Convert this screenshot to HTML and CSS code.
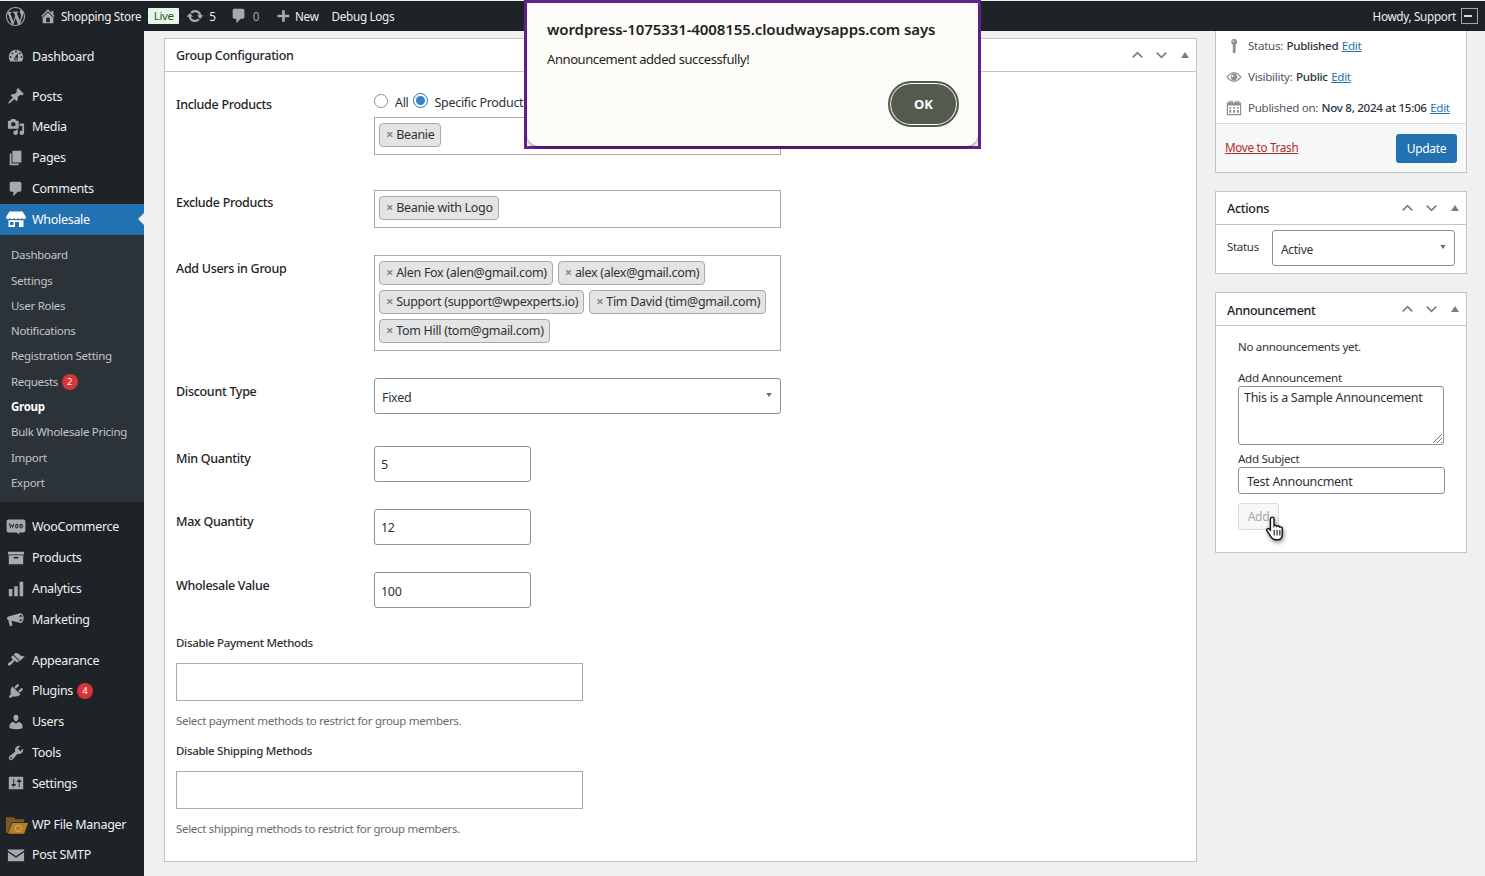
FILE: index.html
```html
<!DOCTYPE html>
<html lang="en">
<head>
<meta charset="utf-8">
<title>Edit Group</title>
<link rel="stylesheet" href="styles.css">
</head>
<body>
<svg class="defs" width="0" height="0" aria-hidden="true">
<symbol id="i-wp" viewBox="0 0 20 20"><path d="M20 10c0-5.51-4.49-10-10-10C4.48 0 0 4.49 0 10c0 5.52 4.48 10 10 10 5.51 0 10-4.48 10-10zM7.78 15.37L4.37 6.22c.55-.02 1.17-.08 1.17-.08.5-.06.44-1.13-.06-1.11 0 0-1.45.11-2.37.11-.18 0-.37 0-.58-.01C4.12 2.69 6.87 1.11 10 1.11c2.33 0 4.45.87 6.05 2.34-.68-.11-1.65.39-1.65 1.58 0 .74.45 1.36.9 2.1.35.61.55 1.36.55 2.46 0 1.49-1.4 5-1.4 5l-3.03-8.37c.54-.02.82-.17.82-.17.5-.05.44-1.25-.06-1.22 0 0-1.44.12-2.38.12-.87 0-2.33-.12-2.33-.12-.5-.03-.56 1.2-.06 1.22l.92.08 1.26 3.41zM17.41 10c.24-.64.74-1.87.43-4.25.7 1.29 1.05 2.71 1.05 4.25 0 3.29-1.73 6.24-4.4 7.78.97-2.59 1.94-5.2 2.92-7.78zM6.1 18.09C3.12 16.65 1.11 13.53 1.11 10c0-1.3.23-2.48.72-3.59C3.25 10.3 4.67 14.2 6.1 18.09zm4.03-6.63l2.58 6.98c-.86.29-1.76.45-2.71.45-.79 0-1.57-.11-2.29-.33.81-2.38 1.62-4.74 2.42-7.1z"/></symbol>
<symbol id="i-home" viewBox="0 0 20 20"><path d="M16 8.5l1.53 1.53-1.06 1.06L10 4.62l-6.47 6.47-1.06-1.06L10 2.5l4 4v-2h2v4zm-6-2.46l6 5.99V18H4v-5.97zM12 17v-5H8v5h4z"/></symbol>
<symbol id="i-update" viewBox="0 0 20 20"><path d="M10.2 3.28c3.53 0 6.43 2.61 6.92 6h2.08l-3.5 4-3.5-4h2.32c-.45-1.97-2.21-3.45-4.32-3.45-1.45 0-2.73.71-3.54 1.78L4.95 5.66C6.23 4.2 8.11 3.28 10.2 3.28zm-.4 13.44c-3.52 0-6.43-2.61-6.92-6H.8l3.5-4c1.17 1.33 2.33 2.67 3.5 4H5.48c.45 1.97 2.21 3.45 4.32 3.45 1.45 0 2.73-.71 3.54-1.78l1.71 1.95c-1.28 1.46-3.15 2.38-5.25 2.38z"/></symbol>
<symbol id="i-comment" viewBox="0 0 20 20"><path d="M5 2h9c1.1 0 2 .9 2 2v7c0 1.1-.9 2-2 2h-2l-5 5v-5H5c-1.1 0-2-.9-2-2V4c0-1.1.9-2 2-2z"/></symbol>
<symbol id="i-plus" viewBox="0 0 20 20"><path d="M17 7v3h-5v5H9v-5H4V7h5V2h3v5h5z" transform="translate(0 1.5)"/></symbol>
<symbol id="i-dash" viewBox="0 0 20 20"><path d="M3.76 16h12.48c1.1-1.37 1.76-3.11 1.76-5 0-4.42-3.58-8-8-8s-8 3.58-8 8c0 1.89.66 3.63 1.76 5zM10 4c.55 0 1 .45 1 1s-.45 1-1 1-1-.45-1-1 .45-1 1-1zM6 6c.55 0 1 .45 1 1s-.45 1-1 1-1-.45-1-1 .45-1 1-1zm8 0c.55 0 1 .45 1 1s-.45 1-1 1-1-.45-1-1 .45-1 1-1zm-5.37 5.55L12 7v6c0 1.1-.9 2-2 2s-2-.9-2-2c0-.57.24-1.08.63-1.45zM4 10c.55 0 1 .45 1 1s-.45 1-1 1-1-.45-1-1 .45-1 1-1zm12 0c.55 0 1 .45 1 1s-.45 1-1 1-1-.45-1-1 .45-1 1-1zm-5 3c0-.55-.45-1-1-1s-1 .45-1 1 .45 1 1 1 1-.45 1-1z"/></symbol>
<symbol id="i-post" viewBox="0 0 20 20"><path d="M10.44 3.02l1.82-1.82 6.36 6.35-1.83 1.82c-1.05-.68-2.48-.57-3.41.36l-.75.75c-.92.93-1.04 2.35-.35 3.41l-1.83 1.82-2.41-2.41-2.8 2.79c-.42.42-3.38 2.71-3.8 2.29s1.86-3.39 2.28-3.81l2.79-2.79L4.1 9.36l1.83-1.82c1.05.69 2.48.57 3.4-.36l.75-.75c.93-.92 1.05-2.35.36-3.41z"/></symbol>
<symbol id="i-media" viewBox="0 0 20 20"><path d="M13 11V4c0-.55-.45-1-1-1h-1.67L9 1H5L3.67 3H2c-.55 0-1 .45-1 1v7c0 .55.45 1 1 1h10c.55 0 1-.45 1-1zM7 4.5c1.38 0 2.5 1.12 2.5 2.5S8.38 9.5 7 9.5 4.5 8.38 4.5 7 5.62 4.5 7 4.5zM14 6h5v10.5c0 1.38-1.12 2.5-2.5 2.5S14 17.88 14 16.5s1.12-2.5 2.5-2.5c.17 0 .34.02.5.05V9h-3V6zm-4 8.05V13h2v3.5c0 1.38-1.12 2.5-2.5 2.5S7 17.88 7 16.5 8.12 14 9.5 14c.17 0 .34.02.5.05z"/></symbol>
<symbol id="i-page" viewBox="0 0 20 20"><path d="M6 15V2h10v13H6zm-1 1h8v2H3V5h2v11z"/></symbol>
<symbol id="i-store" viewBox="0 0 20 20"><path d="M3.5 2.5h13L20 8c0 1.3-1 2.2-2.1 2.2-.9 0-1.6-.5-1.9-1.2-.4.7-1.1 1.2-2 1.2S12.400 9.700 12 9c-.4.7-1.100 1.200-2 1.200S8.400 9.700 8 9c-.4.700-1.100 1.200-2 1.200S4.400 9.700 4 9c-.3.700-1 1.200-1.900 1.200C1 10.200 0 9.300 0 8zM2.500 11.300h15V18H13v-5H9v5H2.500zM4 13v3h3.500v-3z"/></symbol>
<symbol id="i-woo" viewBox="0 0 24 20"><path fill-rule="evenodd" d="M3 1h18c1.300 0 2.300 1 2.300 2.300v11c0 1.300-1 2.300-2.300 2.300h-5.500l.8 2.400-4-2.400H3C1.700 16.600.7 15.600.7 14.300v-11C.7 2 1.700 1 3 1zm.5 4.600L5 11.800l1.800-3.400 1.200 3.400 2-5.800H8.800L7.900 9 6.900 6.500 5.600 9 4.900 5.600zM13 6.200c-1.300 0-2 1.200-2 2.700s.7 2.900 2 2.900 2-1.400 2-2.900-.8-2.700-2-2.700zm5.200 0c-1.300 0-2 1.200-2 2.700s.7 2.900 2 2.900 2-1.400 2-2.900-.8-2.700-2-2.700zM13 7.600c.4 0 .8.600.8 1.400s-.4 1.500-.8 1.500-.8-.7-.8-1.500.4-1.400.8-1.400zm5.200 0c.4 0 .8.600.8 1.400s-.4 1.500-.8 1.500-.8-.7-.8-1.500.4-1.400.8-1.400z"/></symbol>
<symbol id="i-box" viewBox="0 0 20 20"><path fill-rule="evenodd" d="M1 3h18v3H1zM2 7h16v10H2zm5.500 2v1.500h5V9z"/></symbol>
<symbol id="i-chart" viewBox="0 0 20 20"><path d="M2 10h4v8H2zM8 7h4v11H8zM14 2h4v16h-4z"/></symbol>
<symbol id="i-mega" viewBox="0 0 20 20"><path fill-rule="evenodd" d="M18.500 9c0 3-1.400 5.500-3.100 5.500-.4 0-.8-.1-1.100-.4L4.800 12 6 16.500c.1.500-.2 1-.7 1.100l-1.300.3c-.5.1-1-.2-1.100-.7L1.500 11.400C.7 11 0 10.300 0 9.300c0-1 .6-1.800 1.500-2.100l12.900-3.500c.3-.2.600-.2 1-.2 1.700 0 3.100 2.500 3.100 5.500zm-3.100-3.700c-.9 0-1.700 1.700-1.700 3.700s.8 3.700 1.700 3.700 1.700-1.700 1.700-3.700-.8-3.700-1.700-3.700zm0 2a1.700 1.700 0 100 3.400 1.700 1.700 0 000-3.400z"/></symbol>
<symbol id="i-brush" viewBox="0 0 20 20"><path d="M14.480 11.060L7.410 3.990l1.500-1.500c.5-.56 2.300-.47 3.510.32 1.210.8 1.430 1.280 2.910 2.100 1.180.64 2.450 1.260 4.450.85zm-.71.71L6.700 4.700 4.930 6.470c-.39.39-.39 1.020 0 1.410l1.060 1.060c.39.39.39 1.030 0 1.420-.6.6-1.430 1.110-2.210 1.690-.35.26-.7.53-1.010.84C1.430 13.230.4 14.850 1.400 15.850c.99 1 2.620-.03 3.960-1.370.31-.31.58-.66.85-1.020.57-.78 1.080-1.610 1.690-2.210.39-.39 1.020-.39 1.410 0l1.060 1.060c.39.39 1.020.39 1.410 0z"/></symbol>
<symbol id="i-plug" viewBox="0 0 20 20"><path d="M13.110 4.360L9.870 7.600 8 5.730l3.240-3.240c.35-.34 1.050-.2 1.560.32.52.51.66 1.210.31 1.550zm-8 1.770l.91-1.120 9.010 9.010-1.190.84c-.71.71-2.630 1.160-3.820 1.160H6.140L4.900 17.260c-.59.59-1.540.59-2.120 0-.59-.58-.59-1.530 0-2.120l1.240-1.240v-3.880c0-1.130.4-3.190 1.090-3.890zm7.260 3.970l3.240-3.240c.34-.35 1.040-.21 1.550.31.52.51.66 1.210.31 1.550l-3.240 3.250z"/></symbol>
<symbol id="i-users" viewBox="0 0 20 20"><path d="M10 9.250c-2.270 0-2.730-3.440-2.730-3.440C7 4.020 7.820 2 9.970 2c2.160 0 2.980 2.020 2.710 3.810 0 0-.41 3.440-2.680 3.440zm0 2.570L12.720 10c2.390 0 4.520 2.330 4.520 4.530v2.490s-3.650 1.130-7.240 1.130c-3.650 0-7.240-1.130-7.240-1.130v-2.490c0-2.250 1.940-4.480 4.470-4.480z"/></symbol>
<symbol id="i-tools" viewBox="0 0 20 20"><path d="M16.680 9.770c-1.340 1.340-3.300 1.670-4.950.99l-5.410 6.520c-.99.99-2.590.99-3.580 0s-.99-2.59 0-3.570l6.520-5.420c-.68-1.650-.35-3.61.99-4.950 1.280-1.280 3.120-1.620 4.720-1.060l-2.890 2.890 2.820 2.820 2.860-2.870c.53 1.580.18 3.390-1.080 4.650zM3.810 16.210c.4.39 1.040.39 1.430 0 .4-.4.4-1.040 0-1.430-.39-.4-1.030-.4-1.430 0-.39.39-.39 1.030 0 1.430z"/></symbol>
<symbol id="i-set" viewBox="0 0 20 20"><path d="M18 16V4c0-.55-.45-1-1-1H3c-.55 0-1 .45-1 1v12c0 .55.45 1 1 1h14c.55 0 1-.45 1-1zM8 11h1c.55 0 1 .45 1 1s-.45 1-1 1H8v1.500c0 .28-.22.5-.5.5s-.5-.22-.5-.5V13H6c-.55 0-1-.45-1-1s.45-1 1-1h1V5.500c0-.28.22-.5.5-.5s.5.22.5.5V11zm5-2h-1c-.55 0-1-.45-1-1s.45-1 1-1h1V5.500c0-.28.22-.5.5-.5s.5.22.5.5V7h1c.55 0 1 .45 1 1s-.45 1-1 1h-1v5.500c0 .28-.22.5-.5.5s-.5-.22-.5-.5V9z"/></symbol>
<symbol id="i-mail" viewBox="0 0 20 20"><path d="M1 4h18v1.200l-9 6-9-6zM1 7l9 6 9-6v10H1z"/></symbol>
<symbol id="i-folder" viewBox="0 0 24 20"><path d="M1 2h8l2 2h9v3H7L3 18H1z" fill="#7a5a22"/><path d="M7.500 8H24l-4 11H3z" fill="#b57f24"/><circle cx="14" cy="13.500" r="3.300" fill="none" stroke="#d9b36a" stroke-width="1"/></symbol>
<symbol id="i-pin" viewBox="0 0 20 20"><path fill-rule="evenodd" d="M10 1a4 4 0 012 7.460V18l-2 1.500L8.500 18V8.460A4 4 0 0110 1zm-.7 2a1 1 0 100 2 1 1 0 000-2z"/></symbol>
<symbol id="i-eye" viewBox="0 0 20 20"><path fill-rule="evenodd" d="M10 4c4.500 0 8 3.500 9.500 6-1.500 2.500-5 6-9.500 6S2 12.500.5 10C2 7.500 5.500 4 10 4zm0 1.500c-3.300 0-6 2.200-7.700 4.500 1.700 2.300 4.400 4.500 7.700 4.500s6-2.200 7.700-4.500C16 7.700 13.300 5.500 10 5.500zM10 6a4 4 0 110 8 4 4 0 010-8zM8.300 7.500a1.200 1.200 0 100 2.400 1.200 1.200 0 000-2.400z"/></symbol>
<symbol id="i-cal" viewBox="0 0 20 20"><path fill-rule="evenodd" d="M3.500 1h2v2h1V1h2v2h3V1h2v2h1V1h2v2H19v16H1V3h2.500zM2.500 7v10.500h15V7zm1.500 2h2.500v2H4zm0 3.500h2.500v3.500H4zM8.800 9h2.500v2H8.800zm0 3.500h2.500V16H8.800zM13.500 9H16v2h-2.500zm0 3.500H16V16h-2.500z"/></symbol>
<symbol id="i-up" viewBox="0 0 16 10"><path d="M2 8l6-6 6 6" fill="none" stroke="currentColor" stroke-width="2"/></symbol>
<symbol id="i-down" viewBox="0 0 16 10"><path d="M2 2l6 6 6-6" fill="none" stroke="currentColor" stroke-width="2"/></symbol>
<symbol id="i-tri" viewBox="0 0 8 6"><path d="M4 0l4 6H0z"/></symbol>
<symbol id="i-tri-d" viewBox="0 0 8 6"><path d="M0 0h8L4 6z"/></symbol>
</svg>

<header class="adminbar">
  <svg class="bar-wp"><use href="#i-wp"/></svg>
  <div class="bar-item bar-site"><svg class="bar-ico"><use href="#i-home"/></svg><span>Shopping Store</span></div>
  <span class="live">Live</span>
  <div class="bar-item bar-update"><svg class="bar-ico"><use href="#i-update"/></svg><span>5</span></div>
  <div class="bar-item bar-comments"><svg class="bar-ico"><use href="#i-comment"/></svg><span class="dim">0</span></div>
  <div class="bar-item bar-new"><svg class="bar-ico"><use href="#i-plus"/></svg><span>New</span></div>
  <div class="bar-item bar-debug"><span>Debug Logs</span></div>
  <div class="bar-right"><span>Howdy, Support</span><span class="avatar"><i></i></span></div>
</header>

<div class="shell">
  <nav class="sidebar">
    <a class="menu first"><svg class="m-ico"><use href="#i-dash"/></svg><span>Dashboard</span></a>
    <a class="menu gap-first"><svg class="m-ico"><use href="#i-post"/></svg><span>Posts</span></a>
    <a class="menu"><svg class="m-ico"><use href="#i-media"/></svg><span>Media</span></a>
    <a class="menu"><svg class="m-ico"><use href="#i-page"/></svg><span>Pages</span></a>
    <a class="menu"><svg class="m-ico"><use href="#i-comment"/></svg><span>Comments</span></a>
    <a class="menu current"><svg class="m-ico"><use href="#i-store"/></svg><span>Wholesale</span></a>
    <div class="submenu">
      <a>Dashboard</a><a>Settings</a><a>User Roles</a><a>Notifications</a><a>Registration Setting</a>
      <a>Requests <b class="count">2</b></a>
      <a class="sub-current">Group</a><a>Bulk Wholesale Pricing</a><a>Import</a><a>Export</a>
    </div>
    <a class="menu after-sub"><svg class="m-ico m-woo"><use href="#i-woo"/></svg><span>WooCommerce</span></a>
    <a class="menu"><svg class="m-ico"><use href="#i-box"/></svg><span>Products</span></a>
    <a class="menu"><svg class="m-ico"><use href="#i-chart"/></svg><span>Analytics</span></a>
    <a class="menu"><svg class="m-ico"><use href="#i-mega"/></svg><span>Marketing</span></a>
    <a class="menu gap"><svg class="m-ico"><use href="#i-brush"/></svg><span>Appearance</span></a>
    <a class="menu"><svg class="m-ico"><use href="#i-plug"/></svg><span>Plugins <b class="count">4</b></span></a>
    <a class="menu"><svg class="m-ico"><use href="#i-users"/></svg><span>Users</span></a>
    <a class="menu"><svg class="m-ico"><use href="#i-tools"/></svg><span>Tools</span></a>
    <a class="menu"><svg class="m-ico"><use href="#i-set"/></svg><span>Settings</span></a>
    <a class="menu gap"><svg class="m-ico m-folder"><use href="#i-folder"/></svg><span>WP File Manager</span></a>
    <a class="menu"><svg class="m-ico"><use href="#i-mail"/></svg><span>Post SMTP</span></a>
  </nav>

  <main class="content">
    <section class="box main-box">
      <div class="box-head"><h2>Group Configuration</h2>
        <div class="handles"><svg class="h-arrow"><use href="#i-up"/></svg><svg class="h-arrow"><use href="#i-down"/></svg><svg class="h-tri"><use href="#i-tri"/></svg></div>
      </div>
      <div class="form">
        <div class="row row-include">
          <label class="lbl">Include Products</label>
          <div>
            <div class="radios"><span class="radio"></span><span class="r-txt">All</span><span class="radio on"></span><span class="r-txt">Specific Products</span></div>
            <div class="multi"><span class="chip"><i>×</i>Beanie</span></div>
          </div>
        </div>
        <div class="row row-exclude">
          <label class="lbl">Exclude Products</label>
          <div class="multi"><span class="chip"><i>×</i>Beanie with Logo</span></div>
        </div>
        <div class="row row-users">
          <label class="lbl">Add Users in Group</label>
          <div class="multi multi-users">
            <span class="chip"><i>×</i>Alen Fox (alen@gmail.com)</span>
            <span class="chip"><i>×</i>alex (alex@gmail.com)</span>
            <span class="chip"><i>×</i>Support (support@wpexperts.io)</span>
            <span class="chip"><i>×</i>Tim David (tim@gmail.com)</span>
            <span class="chip"><i>×</i>Tom Hill (tom@gmail.com)</span>
          </div>
        </div>
        <div class="row row-discount">
          <label class="lbl">Discount Type</label>
          <div class="select wide"><span>Fixed</span><svg class="sel-tri"><use href="#i-tri-d"/></svg></div>
        </div>
        <div class="row row-min">
          <label class="lbl">Min Quantity</label>
          <div class="num">5</div>
        </div>
        <div class="row row-max">
          <label class="lbl">Max Quantity</label>
          <div class="num">12</div>
        </div>
        <div class="row row-value">
          <label class="lbl">Wholesale Value</label>
          <div class="num num-last">100</div>
        </div>
        <div class="stack first-stack">
          <label class="stack-lbl">Disable Payment Methods</label>
          <div class="empty-field"></div>
          <p class="hint">Select payment methods to restrict for group members.</p>
        </div>
        <div class="stack">
          <label class="stack-lbl">Disable Shipping Methods</label>
          <div class="empty-field"></div>
          <p class="hint">Select shipping methods to restrict for group members.</p>
        </div>
      </div>
    </section>

    <aside class="side">
      <section class="box publish">
        <div class="pub-body">
          <p class="pub-row"><svg class="pub-ico pin"><use href="#i-pin"/></svg>Status: <b>Published</b> <a>Edit</a></p>
          <p class="pub-row"><svg class="pub-ico"><use href="#i-eye"/></svg>Visibility: <b>Public</b> <a>Edit</a></p>
          <p class="pub-row"><svg class="pub-ico"><use href="#i-cal"/></svg>Published on: <b>Nov 8, 2024 at 15:06</b> <a>Edit</a></p>
        </div>
        <div class="pub-foot"><a class="trash">Move to Trash</a><span class="update">Update</span></div>
      </section>

      <section class="box">
        <div class="box-head side-head"><h2>Actions</h2>
          <div class="handles"><svg class="h-arrow"><use href="#i-up"/></svg><svg class="h-arrow"><use href="#i-down"/></svg><svg class="h-tri"><use href="#i-tri"/></svg></div>
        </div>
        <div class="actions-body"><span class="status-lbl">Status</span><div class="select status-sel"><span>Active</span><svg class="sel-tri"><use href="#i-tri-d"/></svg></div></div>
      </section>

      <section class="box announce">
        <div class="box-head side-head ann-head"><h2>Announcement</h2>
          <div class="handles"><svg class="h-arrow"><use href="#i-up"/></svg><svg class="h-arrow"><use href="#i-down"/></svg><svg class="h-tri"><use href="#i-tri"/></svg></div>
        </div>
        <div class="ann-body">
          <p class="ann-none">No announcements yet.</p>
          <label class="ann-lbl ann-lbl-1">Add Announcement</label>
          <div class="ann-area">This is a Sample Announcement
            <svg class="grip" viewBox="0 0 9 9"><path d="M0 9L9 0M4 9l5-5M8 9l1-1" stroke="#777" fill="none"/></svg>
          </div>
          <label class="ann-lbl ann-lbl-2">Add Subject</label>
          <div class="ann-input">Test Announcment</div>
          <div class="add-wrap"><span class="add-btn">Add</span>
            <svg class="cursor" viewBox="0 0 20 26"><path d="M6.500 2c1 0 1.700.7 1.700 1.700V10c.4-.6 2.400-.5 2.700.5.600-.6 2.300-.3 2.600.7.800-.4 2.300 0 2.300 1.300v5.500c0 3-2 5-5 5H9.500c-2 0-3-1-4-2.500L1.500 14.500c-.6-1 .7-2.700 2.200-1.500l1.100 1.100V3.700C4.800 2.700 5.500 2 6.500 2z" fill="#fff" stroke="#111" stroke-width="1.300"/><path d="M8.300 14v5M11 14v5M13.600 14v5" stroke="#111"/></svg>
          </div>
        </div>
      </section>
    </aside>
  </main>
</div>

<div class="dialog">
  <div class="dialog-inner">
    <h1>wordpress-1075331-4008155.cloudwaysapps.com says</h1>
    <p>Announcement added successfully!</p>
    <div class="dialog-foot"><span class="ok">OK</span></div>
  </div>
</div>
</body>
</html>
```

FILE: styles.css
```css
* { box-sizing: border-box; }
html, body { margin: 0; height: 876px; overflow: hidden; }
body {
  font-family: "Noto Sans", "Open Sans", sans-serif;
  font-size: 12.5px;
  letter-spacing: -0.3px;
  color: #2c3338;
  background: #f0f0f1;
  display: flex;
  flex-direction: column;
  position: relative;
}
.defs { position: absolute; }
p, h1, h2 { margin: 0; }

/* admin bar */
.adminbar {
  height: 30px;
  margin-top: 1px;
  flex: none;
  background: #1d2327;
  color: #f0f0f1;
  display: flex;
  align-items: center;
  padding: 0 7px 0 6px;
  font-size: 11.7px;
  line-height: 18px;
}
.adminbar span { padding-bottom: 1px; }
.adminbar svg { fill: #a7aaad; }
.adminbar .avatar, .adminbar .live, .adminbar .bar-right { padding-bottom: 0; }
.bar-wp { width: 19px; height: 19px; margin-right: 13.500px; flex: none; }
.bar-item { display: flex; align-items: center; }
.bar-ico { width: 16px; height: 16px; flex: none; }
.bar-site .bar-ico { width: 18px; height: 18px; margin-right: 4.500px; }
.live {
  margin-left: 7px;
  width: 31px;
  height: 16px;
  background: #e8f5e9;
  color: #1c5d2a;
  font-size: 11.5px;
  line-height: 15px;
  text-align: center;
  border-radius: 1px;
  margin-top: -1px;
}
.bar-update { margin-left: 7px; }
.bar-update .bar-ico { width: 18px; height: 18px; margin-right: 5px; }
.bar-comments { margin-left: 14px; }
.bar-comments .bar-ico { width: 18px; height: 18px; margin-right: 5px; }
.dim { color: #a7aaad; }
.bar-new { margin-left: 15px; }
.bar-new .bar-ico { width: 18px; height: 18px; margin-right: 3px; }
.bar-debug { margin-left: 13px; }
.bar-right { margin-left: auto; display: flex; align-items: center; gap: 5px; }
.avatar {
  width: 17px; height: 16px;
  border: 1px solid #a7aaad;
  background: #1d2327;
  display: flex; align-items: center; justify-content: center;
}
.avatar i { display: block; width: 8px; height: 2px; background: #ddd; margin-left: -4px; }

/* layout */
.shell { flex: 1; display: flex; min-height: 0; }
.sidebar {
  width: 144px;
  flex: none;
  background: #1d2327;
  display: flex;
  flex-direction: column;
  color: #f0f0f1;
}
.menu {
  height: 30.8px;
  display: flex;
  align-items: center;
  padding-left: 7px;
  font-size: 12.5px;
  line-height: 18px;
  flex: none;
  position: relative;
}
.menu span { margin-left: 25px; white-space: nowrap; }
.m-ico { position: absolute; left: 7px; top: 6px; width: 18px; height: 18px; fill: #a7aaad; }
.m-woo { left: 6px; width: 20px; height: 18px; }
.m-folder { left: 5px; width: 23px; height: 20px; }
.first { margin-top: 10.4px; }
.gap-first { margin-top: 9px; }
.gap { margin-top: 10px; }
.current { background: #2271b1; color: #fff; margin-top: 0; }
.current .m-ico { fill: #fff; left: 6px; width: 20px; height: 20px; top: 5px; }
.current::after {
  content: "";
  position: absolute;
  right: 0; top: 9px;
  border: 6px solid transparent;
  border-right-color: #f0f0f1;
  border-left: 0;
}
.submenu {
  background: #2c3338;
  color: #c3c4c7;
  padding: 7px 0 7px 11px;
  display: flex;
  flex-direction: column;
  font-size: 11.5px;
  flex: none;
}
.submenu a { height: 25.33px; line-height: 25px; white-space: nowrap; }
.sub-current { color: #fff; font-weight: 700; }
.after-sub { margin-top: 9.500px; }
.count {
  display: inline-block;
  width: 16px; height: 16px;
  border-radius: 50%;
  background: #d63638;
  color: #fff;
  font-size: 9.5px;
  line-height: 16px;
  text-align: center;
  font-weight: 400;
  margin-left: 1px;
  vertical-align: 1px;
  letter-spacing: 0;
}

/* content */
.content {
  flex: 1;
  display: flex;
  align-items: flex-start;
  padding: 0 18px 0 20px;
  gap: 18px;
  min-width: 0;
}
.box { background: #fff; border: 1px solid #c3c4c7; }
.main-box { width: 1033px; height: 824px; margin-top: 7px; flex: none; }
.box-head {
  height: 33px;
  border-bottom: 1px solid #c3c4c7;
  display: flex;
  align-items: center;
  justify-content: space-between;
  padding: 0 7px 0 11px;
}
.box-head h2 { font-size: 12.5px; font-weight: 500; color: #1d2327; line-height: 18px; padding-top: 2px; }
.ann-head h2 { padding-top: 3px; }
.handles { display: flex; align-items: center; color: #787c82; }
.h-arrow { width: 13px; height: 8px; margin-right: 11px; color: #787c82; }
.h-tri { width: 8px; height: 6px; fill: #787c82; margin-left: 2px; margin-right: 0; }

.form { padding: 21px 0 0 11px; display: flex; flex-direction: column; }
.row { display: grid; grid-template-columns: 198px 407px; align-items: start; }
.lbl { font-size: 12.5px; font-weight: 500; color: #1d2327; line-height: 18px; }
.row-include .lbl { padding-top: 3px; }
.row-exclude { margin-top: 35px; }
.row-exclude .lbl { padding-top: 4px; }
.row-users { margin-top: 27px; }
.row-users .lbl { padding-top: 5px; }
.row-discount { margin-top: 27px; }
.row-discount .lbl { padding-top: 5px; }
.row-min { margin-top: 32px; }
.row-min .lbl { padding-top: 4px; }
.row-max { margin-top: 27px; }
.row-max .lbl { padding-top: 4px; }
.row-value { margin-top: 27px; }
.row-value .lbl { padding-top: 5px; }

.radios { height: 24px; padding-bottom: 5px; display: flex; align-items: center; white-space: nowrap; }
.radio {
  width: 14px; height: 14px;
  border-radius: 50%;
  border: 1px solid #8c8f94;
  background: #fff;
  flex: none;
  margin-top: -3px;
}
.radio.on { width: 15px; height: 15px; border-color: #2271b1; position: relative; margin-left: 4px; margin-top: -4px; }
.radio.on::before {
  content: "";
  position: absolute;
  left: 2px; top: 2px;
  width: 9px; height: 9px;
  border-radius: 50%;
  background: #3582c4;
}
.r-txt { margin-left: 7px; }

.multi {
  border: 1px solid #aaa;
  padding: 5px 4px 4px;
  min-height: 38px;
  display: flex;
  flex-wrap: wrap;
  gap: 5px;
  background: #fff;
  width: 407px;
}
.multi-users { padding-bottom: 7px; }
.chip {
  height: 24px;
  background: #e4e4e4;
  border: 1px solid #aaa;
  border-radius: 4px;
  padding: 0 5px 0 6px;
  line-height: 21px;
  color: #2c3338;
  white-space: nowrap;
}
.chip i { font-style: normal; color: #888; margin-right: 3px; font-weight: 700; font-size: 13px; }

.select {
  height: 36px;
  border: 1px solid #8c8f94;
  border-radius: 3px;
  background: #fff;
  display: flex;
  align-items: center;
  justify-content: space-between;
  padding: 2px 8px 0 7px;
}
.sel-tri { width: 6px; height: 4px; fill: #646970; margin-top: -4px; }
.num {
  width: 157px;
  height: 36px;
  border: 1px solid #8c8f94;
  border-radius: 3px;
  padding: 0 6px;
  line-height: 36px;
  background: #fff;
}
.num-last { line-height: 37px; }
.first-stack { margin-top: 26px; }
.stack { display: flex; flex-direction: column; }
.stack + .stack { margin-top: 12px; }
.stack-lbl { font-size: 11.5px; font-weight: 500; line-height: 18px; color: #2c3338; }
.empty-field { width: 407px; height: 38px; border: 1px solid #aaa; margin-top: 11px; background: #fff; }
.hint { font-size: 11.5px; line-height: 18px; margin-top: 11px; color: #646970; }

/* side */
.side { width: 252px; flex: none; display: flex; flex-direction: column; gap: 18px; }
.publish { border-top: 0; }
.pub-body { height: 93px; padding: 0 0 0 10px; display: flex; flex-direction: column; margin-top: -1px; }
.pub-row {
  height: 31px;
  line-height: 30px;
  font-size: 11.6px;
  color: #50575e;
  display: flex;
  align-items: center;
  gap: 3.5px;
  white-space: nowrap;
}
.pub-row b { font-weight: 500; color: #2c3338; }
.pub-row a { color: #2271b1; text-decoration: underline; }
.pub-ico { width: 16px; height: 16px; fill: #8c8f94; margin-right: 2.500px; flex: none; }
.pub-foot {
  height: 49px;
  background: #f6f7f7;
  border-top: 1px solid #dcdcde;
  display: flex;
  align-items: center;
  justify-content: space-between;
  padding: 0 9px 0 9px;
}
.trash { color: #b32d2e; text-decoration: underline; font-size: 11.7px; margin-top: -2px; }
.update {
  width: 61px; height: 29px;
  background: #2271b1;
  color: #fff;
  border-radius: 3px;
  text-align: center;
  line-height: 29px;
  font-size: 12px;
}
.side-head { padding-right: 7px; }
.side-head .h-arrow { margin-right: 11px; }
.actions-body { height: 48px; display: flex; align-items: flex-start; padding: 5px 11px 0 11px; }
.status-lbl { font-size: 11.5px; line-height: 34px; width: 45px; flex: none; color: #2c3338; }
.status-sel { width: 183px; flex: none; font-size: 12px; padding-left: 8px; }
.announce { height: 261px; }
.ann-body { padding: 12px 0 0 22px; display: flex; flex-direction: column; position: relative; }
.ann-none { font-size: 11.5px; line-height: 18px; color: #2c3338; }
.ann-lbl { font-size: 11.6px; line-height: 15px; color: #2c3338; padding-bottom: 1px; }
.ann-lbl-1 { margin-top: 14px; }
.ann-lbl-2 { margin-top: 6px; }
.ann-area {
  width: 206px; height: 59px;
  border: 1px solid #8c8f94;
  border-radius: 3px;
  padding: 1px 5px;
  line-height: 20px;
  position: relative;
  margin-top: 0;
  background: #fff;
}
.grip { position: absolute; right: 1px; bottom: 1px; width: 9px; height: 9px; }
.ann-input {
  width: 207px; height: 27px;
  border: 1px solid #8c8f94;
  border-radius: 3px;
  padding: 0 8px;
  line-height: 27px;
}
.add-wrap { margin-top: 9px; position: relative; height: 27px; }
.add-btn {
  display: block;
  width: 41px; height: 27px;
  background: #f6f7f7;
  border: 1px solid #dcdcde;
  border-radius: 3px;
  color: #a7aaad;
  text-align: center;
  line-height: 26px;
  font-size: 12px;
}
.cursor {
  position: absolute;
  left: 27px; top: 12px;
  width: 22px; height: 28px;
  filter: drop-shadow(1px 2px 2px rgba(0,0,0,.45));
}

/* dialog */
.dialog {
  position: absolute;
  left: 524px; top: 0;
  width: 457px; height: 149px;
  border: 3px solid #63218b;
  background: #f0f0f1;
}
.dialog-inner {
  height: 100%;
  margin: 0;
  background: #fdfcf8;
  border-radius: 0 4px 12px 12px;
  box-shadow: 0 2px 2px rgba(0,0,0,.3);
  padding: 14px 20px 0 20px;
  display: flex;
  flex-direction: column;
  letter-spacing: 0;
}
.dialog h1 { font-size: 15px; font-weight: 600; line-height: 24px; color: #1f1f1f; letter-spacing: -.1px; white-space: nowrap; }
.dialog p { font-size: 13px; line-height: 18px; margin-top: 9px; color: #1f1f1f; letter-spacing: -.41px; }
.dialog-foot { display: flex; justify-content: flex-end; margin-top: 13px; }
.ok {
  width: 71px; height: 46px;
  margin-right: -1px;
  border-radius: 23px;
  background: #545b4d;
  border: 2px solid #fdfcf8;
  outline: 2px solid #545b4d;
  outline-offset: -2px;
  box-shadow: inset 0 0 0 1px #fff;
  color: #fff;
  font-weight: 700;
  font-size: 13px;
  text-align: center;
  line-height: 42px;
}
```
